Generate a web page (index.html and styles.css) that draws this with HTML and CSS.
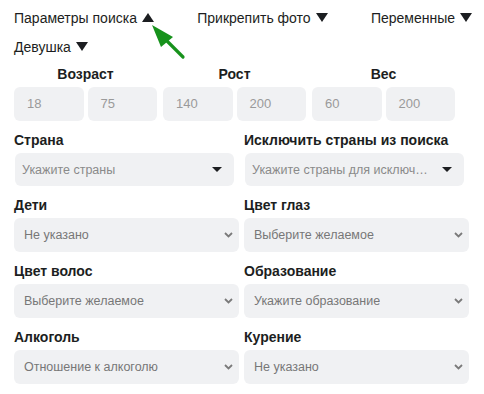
FILE: index.html
```html
<!DOCTYPE html>
<html lang="ru">
<head>
    <meta charset="UTF-8">
    <title>Параметры поиска</title>
    <link rel="stylesheet" href="styles.css">
</head>
<body>
    <div class="page">
        <div class="toolbar">
            <span class="toggle">Параметры поиска <span class="caret up"></span></span>
            <span class="toggle">Прикрепить фото <span class="caret"></span></span>
            <span class="toggle">Переменные <span class="caret"></span></span>
            <span class="toggle">Девушка <span class="caret"></span></span>
        </div>

        <svg class="pointer" width="40" height="40" viewBox="0 0 40 40">
            <line x1="33" y1="34" x2="16" y2="17" stroke="#17921c" stroke-width="3.2" stroke-linecap="round"/>
            <polygon points="2,2 11,24 23,14" fill="#17921c"/>
        </svg>

        <div class="ranges">
            <div class="range">
                <div class="range-title">Возраст</div>
                <div class="pair">
                    <div class="num">18</div>
                    <div class="num">75</div>
                </div>
            </div>
            <div class="range">
                <div class="range-title">Рост</div>
                <div class="pair">
                    <div class="num">140</div>
                    <div class="num">200</div>
                </div>
            </div>
            <div class="range">
                <div class="range-title">Вес</div>
                <div class="pair">
                    <div class="num">60</div>
                    <div class="num">200</div>
                </div>
            </div>
        </div>

        <div class="fields">
            <div class="field">
                <div class="label">Страна</div>
                <div class="select multi">
                    <span class="value">Укажите страны</span>
                    <span class="tri"></span>
                </div>
            </div>
            <div class="field">
                <div class="label">Исключить страны из поиска</div>
                <div class="select multi">
                    <span class="value">Укажите страны для исключения</span>
                    <span class="tri"></span>
                </div>
            </div>
            <div class="field">
                <div class="label">Дети</div>
                <div class="select">
                    <span class="value">Не указано</span>
                    <svg class="chevron" width="9" height="6" viewBox="0 0 9 6"><path d="M1 1 L4.5 4.5 L8 1" fill="none" stroke="#7a7a7a" stroke-width="1.8"/></svg>
                </div>
            </div>
            <div class="field">
                <div class="label">Цвет глаз</div>
                <div class="select">
                    <span class="value">Выберите желаемое</span>
                    <svg class="chevron" width="9" height="6" viewBox="0 0 9 6"><path d="M1 1 L4.5 4.5 L8 1" fill="none" stroke="#7a7a7a" stroke-width="1.8"/></svg>
                </div>
            </div>
            <div class="field">
                <div class="label">Цвет волос</div>
                <div class="select">
                    <span class="value">Выберите желаемое</span>
                    <svg class="chevron" width="9" height="6" viewBox="0 0 9 6"><path d="M1 1 L4.5 4.5 L8 1" fill="none" stroke="#7a7a7a" stroke-width="1.8"/></svg>
                </div>
            </div>
            <div class="field">
                <div class="label">Образование</div>
                <div class="select">
                    <span class="value">Укажите образование</span>
                    <svg class="chevron" width="9" height="6" viewBox="0 0 9 6"><path d="M1 1 L4.5 4.5 L8 1" fill="none" stroke="#7a7a7a" stroke-width="1.8"/></svg>
                </div>
            </div>
            <div class="field">
                <div class="label">Алкоголь</div>
                <div class="select">
                    <span class="value">Отношение к алкоголю</span>
                    <svg class="chevron" width="9" height="6" viewBox="0 0 9 6"><path d="M1 1 L4.5 4.5 L8 1" fill="none" stroke="#7a7a7a" stroke-width="1.8"/></svg>
                </div>
            </div>
            <div class="field">
                <div class="label">Курение</div>
                <div class="select">
                    <span class="value">Не указано</span>
                    <svg class="chevron" width="9" height="6" viewBox="0 0 9 6"><path d="M1 1 L4.5 4.5 L8 1" fill="none" stroke="#7a7a7a" stroke-width="1.8"/></svg>
                </div>
            </div>
        </div>
    </div>
</body>
</html>
```

FILE: styles.css
```css
body {
    margin: 0;
    background: #fff;
    font-family: "Liberation Sans", Arial, sans-serif;
    color: #1c1e21;
}

.page {
    position: relative;
    width: 458px;
    padding: 8px 0 0 14px;
}

.toolbar {
    display: flex;
    flex-wrap: wrap;
    justify-content: space-between;
    column-gap: 36px;
    row-gap: 9px;
    font-size: 14px;
    line-height: 20px;
}

.caret {
    display: inline-block;
    width: 0;
    height: 0;
    margin-left: 1px;
    border-left: 6px solid transparent;
    border-right: 6px solid transparent;
    border-top: 9px solid #1c1e21;
    vertical-align: 1px;
}

.caret.up {
    border-top: 0;
    border-bottom: 9px solid #1c1e21;
}

.pointer {
    position: absolute;
    left: 150px;
    top: 23px;
}

.ranges {
    display: grid;
    grid-template-columns: repeat(3, 143px);
    column-gap: 6px;
    margin-top: 8px;
}

.range-title {
    text-align: center;
    font-weight: bold;
    font-size: 14px;
    line-height: 18px;
    margin-bottom: 4px;
}

.pair {
    display: grid;
    grid-template-columns: 1fr 1fr;
    gap: 4px;
}

.num {
    height: 34px;
    line-height: 34px;
    background: #f0f1f3;
    border-radius: 6px;
    padding-left: 13px;
    font-size: 13px;
    color: #9a9a9a;
}

.fields {
    display: grid;
    grid-template-columns: 225px 225px;
    column-gap: 5px;
    row-gap: 10px;
    margin-top: 10px;
}

.label {
    font-weight: bold;
    font-size: 14px;
    line-height: 18px;
    margin-bottom: 4px;
}

.select {
    display: flex;
    align-items: center;
    justify-content: space-between;
    height: 34px;
    background: #f0f1f3;
    border-radius: 6px;
    padding: 0 6px 0 10px;
    font-size: 12.5px;
    color: #777;
}

.select.multi {
    height: 33px;
    margin: 1px 5px 0 1px;
    padding: 0 12px 0 7px;
    color: #8a8a8a;
}

.value {
    white-space: nowrap;
    overflow: hidden;
    text-overflow: ellipsis;
}

.tri {
    flex: none;
    margin-left: 12px;
    width: 0;
    height: 0;
    border-left: 5px solid transparent;
    border-right: 5px solid transparent;
    border-top: 5px solid #1c1e21;
}

.chevron {
    flex: none;
}
```
